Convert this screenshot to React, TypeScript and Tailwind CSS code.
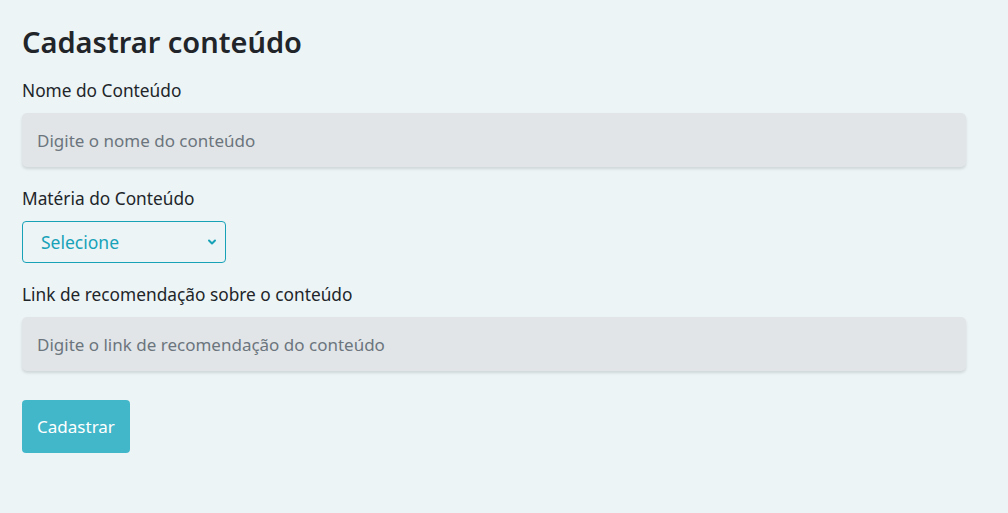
import React from 'react';

const font = { fontFamily: '"Segoe UI", "Noto Sans", Lato, sans-serif' };

const App: React.FC = () => {
  return (
    <div className="min-h-[513px] w-full bg-[#ecf4f6] text-[#212529]" style={font}>
      <form className="flex flex-col px-[22px] pt-[23px]" onSubmit={(e) => e.preventDefault()}>
        <h2 className="mb-[18px] text-[29px] font-semibold leading-[38px] text-[#212529]">Cadastrar conteúdo</h2>

        <label className="mb-[10px] text-[17.3px] leading-[24px]">Nome do Conteúdo</label>
        <input
          type="text"
          placeholder="Digite o nome do conteúdo"
          className="h-[54px] w-[944px] rounded-[5px] bg-[#e1e5e8] px-[15px] text-[17px] shadow-[0_2px_3px_rgba(0,0,0,0.12)] outline-none placeholder:text-[#6c757d]"
        />

        <label className="mb-[10px] mt-[20px] text-[17.3px] leading-[24px]">Matéria do Conteúdo</label>
        <div className="relative h-[42px] w-[204px]">
          <select className="h-full w-full appearance-none rounded-[4px] border border-[#17a2b8] bg-transparent pl-[18px] text-[17.5px] text-[#17a2b8] outline-none">
            <option>Selecione</option>
          </select>
          <svg
            className="pointer-events-none absolute right-[9px] top-[17px]"
            width="10"
            height="8"
            viewBox="0 0 10 8"
            fill="none"
            stroke="#17a2b8"
            strokeWidth="2"
            strokeLinecap="round"
            strokeLinejoin="round"
          >
            <path d="M2 2.5 L5 5.5 L8 2.5" />
          </svg>
        </div>

        <label className="mb-[10px] mt-[20px] text-[17.3px] leading-[24px]">Link de recomendação sobre o conteúdo</label>
        <input
          type="text"
          placeholder="Digite o link de recomendação do conteúdo"
          className="h-[54px] w-[944px] rounded-[5px] bg-[#e1e5e8] px-[15px] text-[17px] shadow-[0_2px_3px_rgba(0,0,0,0.12)] outline-none placeholder:text-[#6c757d]"
        />

        <div className="mt-[29px]">
          <button
            type="submit"
            className="h-[53px] w-[108px] rounded-[4px] bg-[#42b7ca] text-[17px] text-white"
          >
            Cadastrar
          </button>
        </div>
      </form>
    </div>
  );
};

export default App;
